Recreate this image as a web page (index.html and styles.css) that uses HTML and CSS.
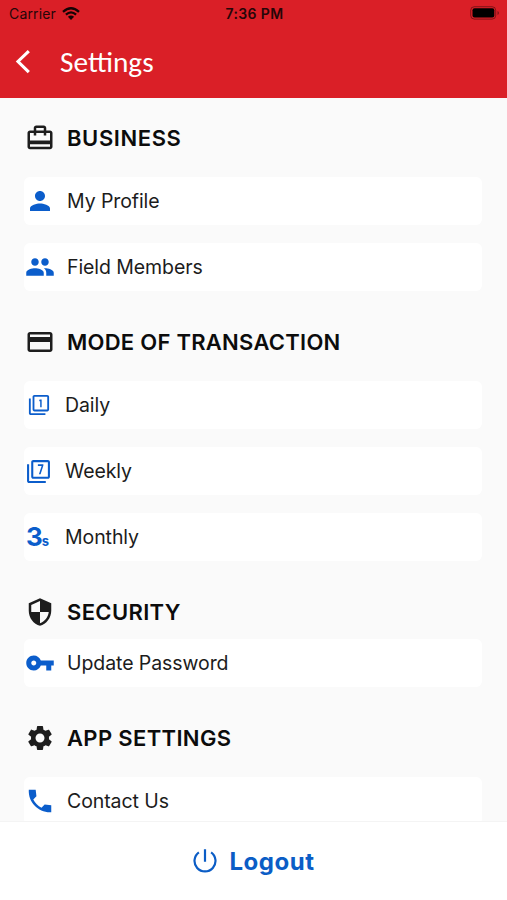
FILE: index.html
```html
<!DOCTYPE html>
<html lang="en">
<head>
<meta charset="utf-8">
<title>Settings</title>
<link rel="stylesheet" href="styles.css">
</head>
<body>
<div class="app">
  <header class="header">
    <div class="status">
      <div class="carrier"><span>Carrier</span>
        <svg class="wifi" viewBox="0 0 18 13"><path d="M1 4.8Q9-2.2 17 4.8M3.9 7.6Q9 3.2 14.1 7.6" fill="none" stroke="currentColor" stroke-width="2.3"/><path d="M5.9 9.7Q9 7.2 12.1 9.7L9 13z" fill="currentColor"/></svg>
      </div>
      <div class="time">7:36 PM</div>
      <svg class="battery" viewBox="0 0 30 14"><rect x=".7" y=".7" width="25" height="12.4" rx="3.6" fill="none" stroke="#000" stroke-opacity=".4"/><rect x="2.5" y="2.3" width="21.8" height="9.2" rx="2"/><path d="M27.5 5v4q1.5-.6 1.5-2t-1.5-2z" opacity=".4"/></svg>
    </div>
    <div class="titlebar">
      <svg class="back" viewBox="0 0 16 24"><path d="M13.8 1.2 3 11.5l10.8 10.6" fill="none" stroke="currentColor" stroke-width="3.1"/></svg>
      <h1>Settings</h1>
    </div>
  </header>
  <main class="content">
    <section class="group business">
      <h2><svg class="icon" viewBox="0 0 24 24"><path d="M20 6h-3V4c0-1.11-.89-2-2-2H9c-1.11 0-2 .89-2 2v2H4c-1.11 0-2 .89-2 2v11c0 1.11.89 2 2 2h16c1.11 0 2-.89 2-2V8c0-1.11-.89-2-2-2zM9 4h6v2H9V4zm11 15H4v-2h16v2zm0-5H4V8h3v2h2V8h6v2h2V8h3v6z"/></svg><span>BUSINESS</span></h2>
      <div class="row"><svg class="icon" viewBox="0 0 24 24"><path d="M12 12c2.21 0 4-1.79 4-4s-1.79-4-4-4-4 1.79-4 4 1.79 4 4 4zm0 2c-2.67 0-8 1.34-8 4v2h16v-2c0-2.66-5.33-4-8-4z"/></svg><span>My Profile</span></div>
      <div class="row"><svg class="icon" viewBox="0 0 24 24"><path d="M16 11c1.66 0 2.99-1.34 2.99-3S17.66 5 16 5s-3 1.34-3 3 1.34 3 3 3zm-8 0c1.66 0 2.99-1.34 2.99-3S9.66 5 8 5 5 6.34 5 8s1.34 3 3 3zm0 2c-2.33 0-7 1.17-7 3.5V19h14v-2.5c0-2.33-4.67-3.5-7-3.5zm8 0c-.29 0-.62.02-.97.05 1.16.84 1.97 1.97 1.97 3.45V19h6v-2.5c0-2.33-4.67-3.5-7-3.5z"/></svg><span>Field Members</span></div>
    </section>
    <section class="group modes">
      <h2><svg class="icon" viewBox="0 0 24 24"><path d="M20 4H4c-1.11 0-1.99.89-1.99 2L2 18c0 1.11.89 2 2 2h16c1.11 0 2-.89 2-2V6c0-1.11-.89-2-2-2zm0 14H4v-6h16v6zm0-10H4V6h16v2z"/></svg><span>MODE OF TRANSACTION</span></h2>
      <div class="row"><svg class="icon small" viewBox="0 0 24 24"><path d="M3 5H1v16c0 1.1.9 2 2 2h16v-2H3zM21 1H7c-1.1 0-2 .9-2 2v14c0 1.1.9 2 2 2h14c1.1 0 2-.9 2-2V3c0-1.1-.9-2-2-2zm0 16H7V3h14zM13.3 6h1.6v8.5h-1.6V7.8h-1V6.4z"/></svg><span>Daily</span></div>
      <div class="row"><svg class="icon medium" viewBox="0 0 24 24"><path d="M3 5H1v16c0 1.1.9 2 2 2h16v-2H3zM21 1H7c-1.1 0-2 .9-2 2v14c0 1.1.9 2 2 2h14c1.1 0 2-.9 2-2V3c0-1.1-.9-2-2-2zm0 16H7V3h14zM11.4 5h5.3v1.3l-2.7 8.4h-1.6l2.6-8.1h-3.6z"/></svg><span>Weekly</span></div>
      <div class="row"><span class="three">3<small>s</small></span><span>Monthly</span></div>
    </section>
    <section class="group security">
      <h2><svg class="icon" viewBox="0 0 24 24"><path d="M12 1 3 5v6c0 5.55 3.84 10.74 9 12 5.16-1.26 9-6.45 9-12V5l-9-4zm0 10.99h7c-.53 4.12-3.28 7.79-7 8.94V12H5V6.3l7-3.11v8.8z"/></svg><span>SECURITY</span></h2>
      <div class="row"><svg class="icon" viewBox="0 0 24 24"><path d="M12.65 10C11.83 7.67 9.61 6 7 6c-3.31 0-6 2.69-6 6s2.69 6 6 6c2.61 0 4.83-1.67 5.65-4H17v4h4v-4h2v-4H12.65zM7 14c-1.1 0-2-.9-2-2s.9-2 2-2 2 .9 2 2-.9 2-2 2z"/></svg><span>Update Password</span></div>
    </section>
    <section class="group settings">
      <h2><svg class="icon" viewBox="0 0 24 24"><path d="M19.14 12.94c.04-.3.06-.61.06-.94 0-.32-.02-.64-.07-.94l2.03-1.58c.18-.14.23-.41.12-.61l-1.92-3.32c-.12-.22-.37-.29-.59-.22l-2.39.96c-.5-.38-1.03-.7-1.62-.94l-.36-2.54c-.04-.24-.24-.41-.48-.41h-3.84c-.24 0-.43.17-.47.41l-.36 2.54c-.59.24-1.13.57-1.62.94l-2.39-.96c-.22-.08-.47 0-.59.22L2.74 8.87c-.12.21-.08.47.12.61l2.03 1.58c-.05.3-.09.63-.09.94s.02.64.07.94l-2.03 1.58c-.18.14-.23.41-.12.61l1.92 3.32c.12.22.37.29.59.22l2.39-.96c.5.38 1.03.7 1.62.94l.36 2.54c.05.24.24.41.48.41h3.84c.24 0 .44-.17.47-.41l.36-2.54c.59-.24 1.13-.56 1.62-.94l2.39.96c.22.08.47 0 .59-.22l1.92-3.32c.12-.22.07-.47-.12-.61l-2.01-1.58zM12 15.6c-1.98 0-3.6-1.62-3.6-3.6s1.62-3.6 3.6-3.6 3.6 1.62 3.6 3.6-1.62 3.6-3.6 3.6z"/></svg><span>APP SETTINGS</span></h2>
      <div class="row"><svg class="icon" viewBox="0 0 24 24"><path d="m21 15.46-5.27-.61-2.52 2.52c-2.83-1.44-5.15-3.75-6.59-6.59l2.53-2.53L8.54 3H3.03C2.45 13.18 10.82 21.55 21 20.97v-5.51z"/></svg><span>Contact Us</span></div>
    </section>
  </main>
  <footer class="footer">
    <svg class="power" viewBox="0 0 24 24"><path d="M12 .3v12.5M5.9 3.4a10.5 10.5 0 1 0 12.2 0" fill="none" stroke="currentColor" stroke-width="2.2"/></svg>
    <span>Logout</span>
  </footer>
</div>
</body>
</html>
```
FILE: styles.css
```css
* { box-sizing: border-box; }
body { margin: 0; font-family: Inter, sans-serif; background: #fafafa; color: #1c1c1c; }
.app { height: 900px; display: flex; flex-direction: column; overflow: hidden; }
.header { height: 98px; flex: none; background: #da1f27; color: #fff; }
.status { height: 26px; padding: 0 7px 0 9px; display: grid; grid-template-columns: 1fr auto 1fr; align-items: center; color: #260608; font-size: 14px; }
.carrier { display: flex; align-items: center; gap: 6px; letter-spacing: .15px; }
.wifi { width: 18px; height: 13px; color: #150304; }
.time { font-weight: 600; letter-spacing: .4px; }
.battery { width: 30px; height: 14px; justify-self: end; }
.titlebar { height: 72px; display: flex; align-items: center; padding: 0 0 0 15px; }
.back { width: 16px; height: 24px; margin-right: 29px; }
h1 { margin: 0; font: 400 29.3px/34px Carlito, Lato, sans-serif; }
.content { flex: 1; min-height: 0; overflow: hidden; padding: 23px 25px 0 24px; }
.group h2 { display: flex; align-items: center; height: 34px; margin: 0; padding-left: 1px; font-size: 22px; font-weight: 600; color: #0c0c0c; letter-spacing: .35px; }
.group h2 .icon { color: #1d1d1d; }
.icon { width: 30px; height: 30px; margin-right: 12px; fill: currentColor; color: #0b5dcb; flex: none; }
.row { display: flex; align-items: center; height: 48px; padding-left: 1px; border-radius: 6px; background: #fff; font-size: 19.5px; letter-spacing: -.08px; margin-bottom: 18px; }
.business h2 { margin-bottom: 22px; letter-spacing: .6px; }
.modes { margin-top: 34px; }
.modes h2 { margin-bottom: 22px; letter-spacing: .26px; }
.security { margin-top: 34px; }
.security h2 { margin-bottom: 10px; }
.settings { margin-top: 34px; }
.settings h2 { margin-bottom: 22px; }
.icon.small { width: 22px; height: 22px; margin: 0 15px 0 3px; }
.icon.medium { width: 25px; height: 25px; margin: 0 14px 0 1px; }
.three { width: 39px; padding: 0 0 2px 1px; margin-right: 1px; color: #0b5dcb; font-size: 26px; font-weight: 700; letter-spacing: -1px; }
.three small { font-size: 13px; }
.footer { height: 79px; flex: none; display: flex; align-items: center; justify-content: center; gap: 13px; background: #fff; border-top: 1px solid #f4f4f4; color: #0b5dc6; font-size: 24px; font-weight: 700; letter-spacing: .5px; }
.power { width: 24px; height: 24px; }
```
